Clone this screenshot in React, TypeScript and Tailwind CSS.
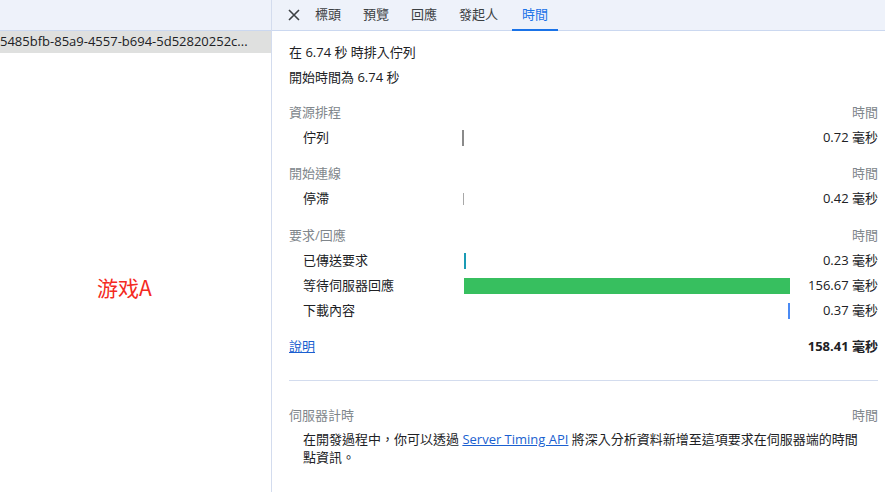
const font = "font-['Segoe_UI','Open_Sans','Noto_Sans_CJK_TC',sans-serif]";

type Row = { label: string; value: string; bar: React.ReactNode };

function TimingRow({ label, value, bar }: Row) {
  return (
    <div className="flex items-center h-[25px]">
      <div className="w-[173px] pl-[14px] text-[#202124]">{label}</div>
      <div className="w-[328px] h-full flex items-center">{bar}</div>
      <div className="flex-1 text-right text-[#202124]">{value}</div>
    </div>
  );
}

function SectionHead({ title }: { title: string }) {
  return (
    <div className="flex items-center justify-between h-[25px] text-[#80868b]">
      <span>{title}</span>
      <span>時間</span>
    </div>
  );
}

export default function App() {
  const tabs = ["標頭", "預覽", "回應", "發起人"];
  return (
    <div className={`${font} flex w-[885px] h-[492px] bg-white text-[13px] overflow-hidden`}>
      {/* request list */}
      <div className="w-[272px] shrink-0 flex flex-col border-r border-[#d3dcee]">
        <div className="h-[31px] shrink-0 bg-[#eef2fa] border-b border-[#cbd8f0]" />
        <div className="h-[22px] bg-[#dfe0df] flex items-center text-[#202124] whitespace-nowrap overflow-hidden">
          5485bfb-85a9-4557-b694-5d52820252c...
        </div>
        <div className="pl-[97px] pt-[224px] text-[21px] text-[#f42a22] font-['Noto_Sans_CJK_SC',sans-serif] leading-none">
          游戏A
        </div>
      </div>

      {/* details */}
      <div className="flex-1 flex flex-col">
        <div className="h-[31px] shrink-0 bg-[#eef2fa] border-b border-[#cbd8f0] flex items-stretch pl-[12px] text-[#3c4043]">
          <div className="w-[20px] flex items-center justify-center mr-[5px]">
            <svg width="12" height="12" viewBox="0 0 12 12" fill="none" stroke="#3c4043" strokeWidth="1.6">
              <path d="M1 1 L11 11 M11 1 L1 11" />
            </svg>
          </div>
          {tabs.map((t) => (
            <div key={t} className="px-[6px] mr-[10px] flex items-center">
              {t}
            </div>
          ))}
          <div className="px-[10px] -ml-[2px] flex items-center text-[#1a73e8] border-b-2 border-[#1a73e8] -mb-px">
            時間
          </div>
        </div>

        <div className="pl-[17px] pr-[7px] pt-[9px] text-[#202124]">
          <div className="h-[25px] flex items-center">在 6.74 秒 時排入佇列</div>
          <div className="h-[25px] flex items-center">開始時間為 6.74 秒</div>

          <div className="mt-[10px]">
            <SectionHead title="資源排程" />
            <TimingRow label="佇列" value="0.72 毫秒" bar={<div className="w-[2px] h-[16px] bg-[#8a8a8a]" />} />
          </div>

          <div className="mt-[11px]">
            <SectionHead title="開始連線" />
            <TimingRow label="停滯" value="0.42 毫秒" bar={<div className="ml-[1px] w-px h-[12px] bg-[#a8a8a8]" />} />
          </div>

          <div className="mt-[12px]">
            <SectionHead title="要求/回應" />
            <TimingRow label="已傳送要求" value="0.23 毫秒" bar={<div className="ml-[2px] w-[2px] h-[16px] bg-[#1a9bb5]" />} />
            <TimingRow label="等待伺服器回應" value="156.67 毫秒" bar={<div className="ml-[2px] w-[326px] h-[16px] bg-[#37bf5f]" />} />
            <TimingRow label="下載內容" value="0.37 毫秒" bar={<div className="ml-[326px] w-[2px] h-[16px] bg-[#4a8af4]" />} />
          </div>

          <div className="mt-[11px] h-[25px] flex items-center justify-between">
            <a className="text-[#1a5fd0] underline">說明</a>
            <span className="font-bold text-[#202124]">158.41 毫秒</span>
          </div>

          <div className="mt-[21px] border-t border-[#d3dcee]" />

          <div className="mt-[22px]">
            <SectionHead title="伺服器計時" />
            <p className="pl-[14px] pr-[12px] leading-[18px] mt-[2px]">
              在開發過程中，你可以透過 <a className="text-[#1a5fd0] underline">Server Timing API</a> 將深入分析資料新增至這項要求在伺服器端的時間點資訊。
            </p>
          </div>
        </div>
      </div>
    </div>
  );
}
